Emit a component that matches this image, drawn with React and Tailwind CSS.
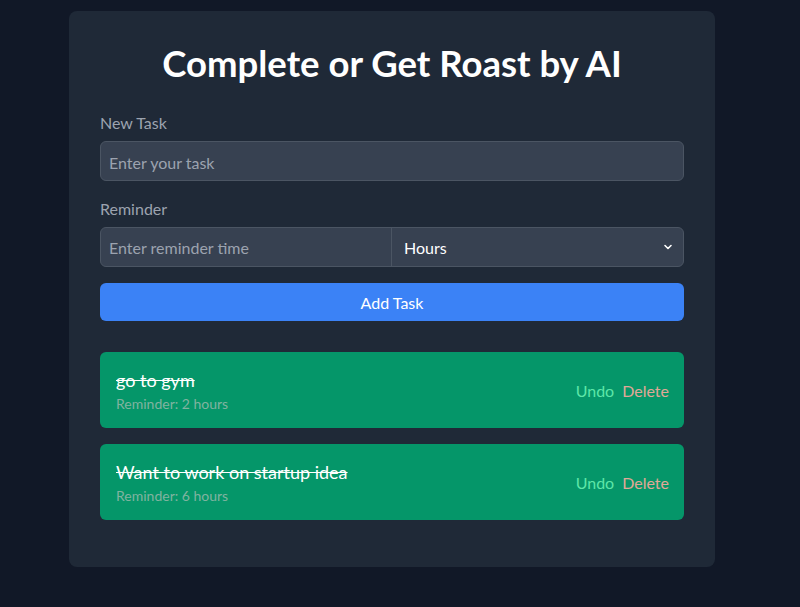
import React from 'react';

const tasks = [
  { id: 1, title: 'go to gym', reminder: 'Reminder: 2 hours' },
  { id: 2, title: 'Want to work on startup idea', reminder: 'Reminder: 6 hours' },
];

function TaskItem({ task }) {
  return (
    <div className="flex items-center justify-between rounded-md bg-[#059669] pb-[14px] pl-4 pr-[15px] pt-4">
      <div>
        <p className="text-lg leading-6 text-white line-through">{task.title}</p>
        <p className="pt-0.5 text-sm leading-5 text-[#80b3a0]">{task.reminder}</p>
      </div>
      <div className="flex items-center gap-2 text-base">
        <button className="text-[#5ee6a8]">Undo</button>
        <button className="text-[#e0a898]">Delete</button>
      </div>
    </div>
  );
}

export default function App() {
  return (
    <div className="min-h-[607px] bg-[#111827] pr-4 pt-[11px] font-['Lato',sans-serif]">
      <div className="mx-auto w-[646px] rounded-lg bg-[#1f2937] px-[31px] pb-[47px] pt-8">
        <h1 className="mb-7 text-center text-[36.5px] leading-10 font-bold text-white">Complete or Get Roast by AI</h1>

        <label className="mb-1.5 block text-base text-[#9ca3af]">New Task</label>
        <input
          type="text"
          placeholder="Enter your task"
          className="mb-4 block h-10 w-full rounded-md border border-[#4b5563] bg-[#374151] px-2 pt-0.5 text-base text-white placeholder:text-[#9ca3af] outline-none"
        />

        <label className="mb-1.5 block text-base text-[#9ca3af]">Reminder</label>
        <div className="mb-4 flex h-10 overflow-hidden rounded-md border border-[#4b5563] bg-[#374151]">
          <input
            type="text"
            placeholder="Enter reminder time"
            className="w-1/2 border-r border-[#4b5563] bg-transparent px-2 pt-0.5 text-base text-white placeholder:text-[#9ca3af] outline-none"
          />
          <div className="relative flex w-1/2 items-center px-3 pt-0.5 text-base text-white">
            <span>Hours</span>
            <svg className="absolute right-2.5 top-1/2 -translate-y-1/2" width="10" height="10" viewBox="0 0 10 10" fill="none">
              <path d="M2 3.5l3 3 3-3" stroke="white" strokeWidth="1.6" strokeLinecap="round" strokeLinejoin="round" />
            </svg>
          </div>
        </div>

        <button className="mb-[31px] h-[38px] w-full rounded-md bg-[#3b82f6] pt-0.5 text-base text-white">Add Task</button>

        <div className="flex flex-col gap-4">
          {tasks.map((t) => (
            <TaskItem key={t.id} task={t} />
          ))}
        </div>
      </div>
    </div>
  );
}
